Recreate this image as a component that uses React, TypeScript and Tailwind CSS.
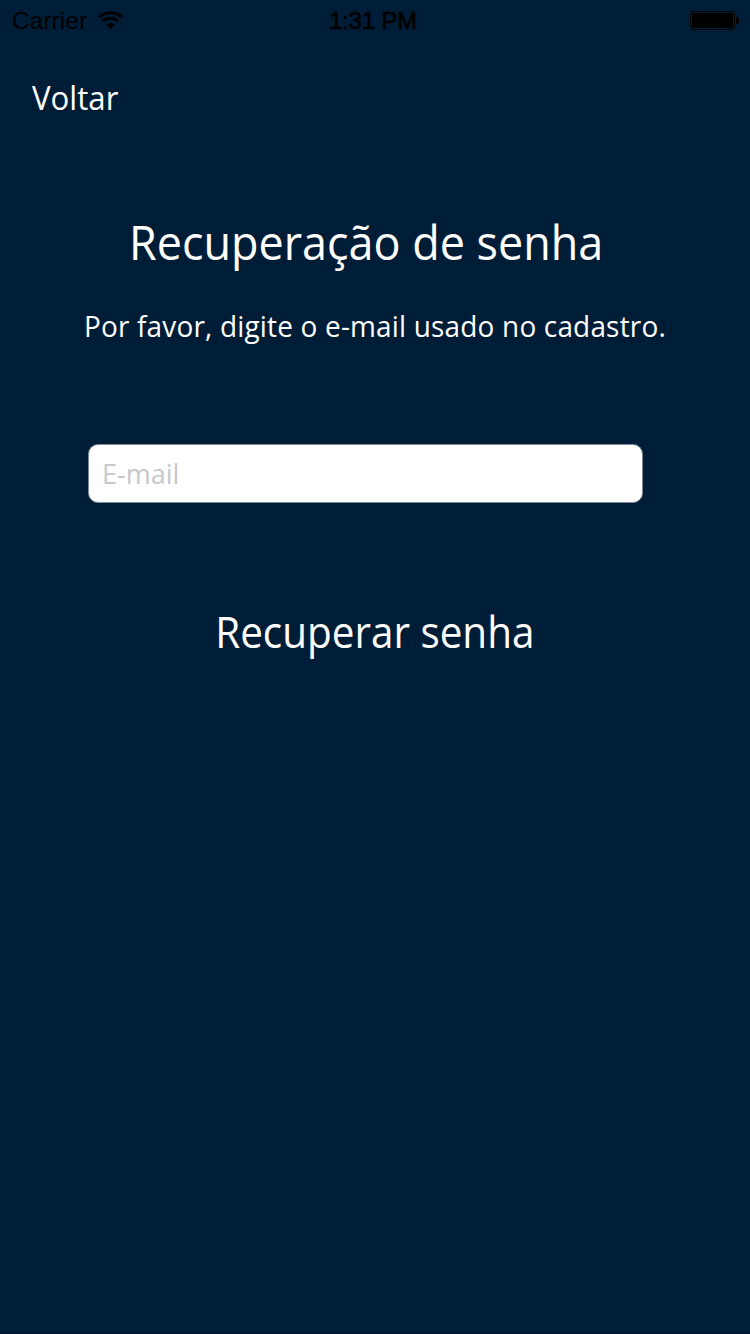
export default function App() {
  return (
    <main className="flex h-[1334px] w-[750px] flex-col overflow-hidden border-b border-[#00142a] bg-[#001d37] font-['Open_Sans','Noto_Sans',sans-serif] text-white">
      <header className="grid h-10 grid-cols-3 items-center pl-3 pr-[11px] font-['Liberation_Sans',Arial,sans-serif] text-black">
        <div className="flex items-center gap-[11px]">
          <span className="text-[24px] leading-[42px] tracking-[0.3px]">Carrier</span>
          <svg className="-mt-[2px]" width="25" height="18" viewBox="0 0 25 18" fill="none" stroke="currentColor" strokeWidth="3">
            <path d="M1.3 6.3a15.8 15.8 0 0 1 22.4 0M5 10.3a10.6 10.6 0 0 1 15 0" />
            <path d="M8.3 13.7a6 6 0 0 1 8.4 0L12.5 18Z" fill="currentColor" stroke="none" />
          </svg>
        </div>
        <time className="pr-[5px] text-center text-[23.5px] leading-[42px] [-webkit-text-stroke:0.7px]">1:31 PM</time>
        <svg className="-mt-px justify-self-end" width="49" height="19" viewBox="0 0 49 19">
          <rect x=".5" y=".5" width="44" height="18" rx="2" fill="none" stroke="currentColor" />
          <rect x="2" y="2" width="41" height="15" rx="1" fill="currentColor" />
          <path d="M46 6a3.5 3.5 0 0 1 0 7Z" fill="currentColor" />
        </svg>
      </header>
      <nav className="px-8 pt-[34px]">
        <button className="block origin-left scale-x-[0.945] text-[33px] leading-[48px]">Voltar</button>
      </nav>
      <section className="flex flex-col items-center">
        <h1 className="mt-[84px] mr-[18px] scale-x-[0.956] text-[47px] leading-[72px]">Recuperação de senha</h1>
        <p className="mt-[28px] scale-x-[0.98] text-[28.5px] leading-[40px] tracking-[0.2px]">Por favor, digite o e-mail usado no cadastro.</p>
        <input aria-label="E-mail" placeholder="E-mail" className="mt-[97.5px] mr-[19px] h-[59px] w-[555px] rounded-[10px] border border-[#7c8998] bg-white px-[13px] pt-px text-[27px] text-black outline-none placeholder:text-[#c7c7cc]" />
        <button className="mt-[99px] scale-x-[0.94] text-[43px] leading-[60px]">Recuperar senha</button>
      </section>
    </main>
  );
}
